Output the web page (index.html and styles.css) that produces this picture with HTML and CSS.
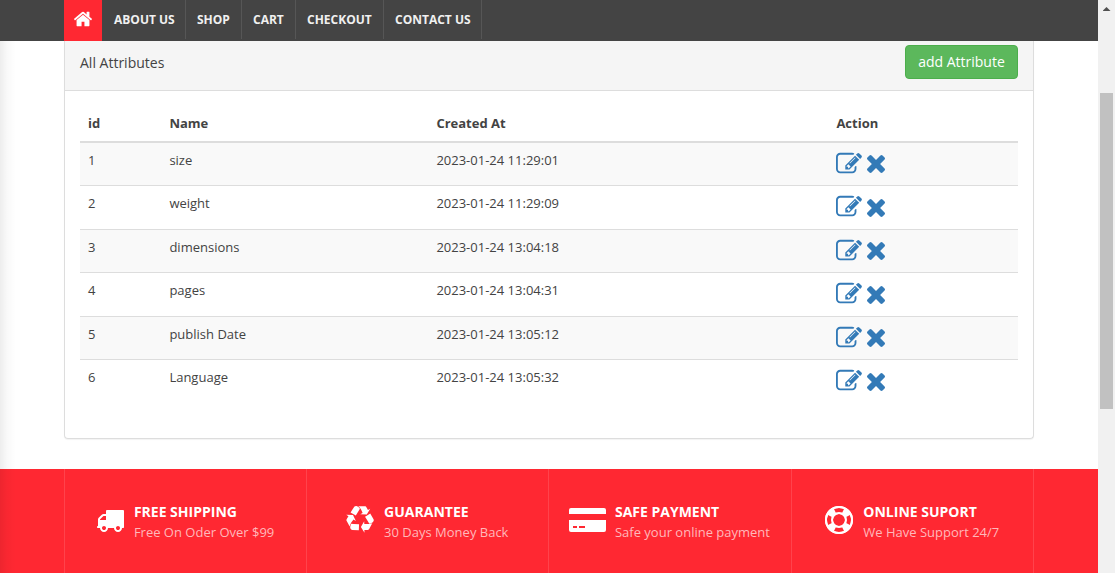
FILE: index.html
```html
<!DOCTYPE html>
<html lang="en">
<head>
<meta charset="utf-8">
<title>All Attributes</title>
<link rel="stylesheet" href="styles.css">
</head>
<body>
<svg class="sprite" aria-hidden="true">
  <symbol id="edit" viewBox="0 0 1792 1792"><path d="M888 1184l116-116-152-152-116 116v56h96v96h56zm440-720q-16-16-33 1l-350 350q-17 17-1 33t33-1l350-350q17-17 1-33zm80 594v190q0 119-84.5 203.5t-203.5 84.5h-832q-119 0-203.5-84.5t-84.5-203.5v-832q0-119 84.5-203.5t203.5-84.5h832q63 0 117 25 15 7 18 23 3 17-9 29l-49 49q-14 14-32 8-23-6-45-6h-832q-66 0-113 47t-47 113v832q0 66 47 113t113 47h832q66 0 113-47t47-113v-126q0-13 9-22l64-64q15-15 35-7t20 29zm-96-738l288 288-672 672h-288v-288zm444 132l-92 92-288-288 92-92q28-28 68-28t68 28l152 152q28 28 28 68t-28 68z"/></symbol>
  <symbol id="times" viewBox="302 366 1188 1188"><path d="M1490 1322q0 40-28 68l-136 136q-28 28-68 28t-68-28l-294-294-294 294q-28 28-68 28t-68-28l-136-136q-28-28-28-68t28-68l294-294-294-294q-28-28-28-68t28-68l136-136q28-28 68-28t68 28l294 294 294-294q28-28 68-28t68 28l136 136q28 28 28 68t-28 68l-294 294 294 294q28 28 28 68z"/></symbol>
</svg>
<div class="page">
  <nav class="navbar">
    <a class="nav-home" href="#"><svg viewBox="0 0 1792 1792"><path d="M1472 992v480q0 26-19 45t-45 19h-384v-384h-256v384h-384q-26 0-45-19t-19-45v-480q0-1 .5-3t.5-3l575-474 575 474q1 2 1 6zm223-69l-62 74q-8 9-21 11h-3q-13 0-21-7l-692-577-692 577q-12 8-24 7-13-2-21-11l-62-74q-8-10-7-23.5t11-21.5l719-599q32-26 76-26t76 26l244 204v-195q0-14 9-23t23-9h192q14 0 23 9t9 23v408l219 182q10 8 11 21.5t-7 23.5z"/></svg></a>
    <a class="nav-link about" href="#">ABOUT US</a>
    <a class="nav-link shop" href="#">SHOP</a>
    <a class="nav-link cart" href="#">CART</a>
    <a class="nav-link checkout" href="#">CHECKOUT</a>
    <a class="nav-link contact" href="#">CONTACT US</a>
  </nav>
  <main class="panel">
    <header class="panel-heading">
      <span>All Attributes</span>
      <a class="btn" href="#">add Attribute</a>
    </header>
    <div class="table">
      <div class="row head"><span>id</span><span>Name</span><span>Created At</span><span>Action</span></div>
      <div class="row"><span>1</span><span>size</span><span>2023-01-24 11:29:01</span><span class="actions"><svg class="edit"><use href="#edit"/></svg><svg class="times"><use href="#times"/></svg></span></div>
      <div class="row"><span>2</span><span>weight</span><span>2023-01-24 11:29:09</span><span class="actions"><svg class="edit"><use href="#edit"/></svg><svg class="times"><use href="#times"/></svg></span></div>
      <div class="row"><span>3</span><span>dimensions</span><span>2023-01-24 13:04:18</span><span class="actions"><svg class="edit"><use href="#edit"/></svg><svg class="times"><use href="#times"/></svg></span></div>
      <div class="row"><span>4</span><span>pages</span><span>2023-01-24 13:04:31</span><span class="actions"><svg class="edit"><use href="#edit"/></svg><svg class="times"><use href="#times"/></svg></span></div>
      <div class="row"><span>5</span><span>publish Date</span><span>2023-01-24 13:05:12</span><span class="actions"><svg class="edit"><use href="#edit"/></svg><svg class="times"><use href="#times"/></svg></span></div>
      <div class="row"><span>6</span><span>Language</span><span>2023-01-24 13:05:32</span><span class="actions"><svg class="edit"><use href="#edit"/></svg><svg class="times"><use href="#times"/></svg></span></div>
    </div>
  </main>
  <footer class="services">
    <div class="service">
      <svg class="truck" viewBox="64 256 1728 1408"><path d="M640 1408q0-52-38-90t-90-38-90 38-38 90 38 90 90 38 90-38 38-90zm-384-512h384v-256h-158q-13 0-22 9l-195 195q-9 9-9 22v30zm1280 512q0-52-38-90t-90-38-90 38-38 90 38 90 90 38 90-38 38-90zm256-1088v1024q0 15-4 26.5t-13.5 18.5-16.5 11.5-23.5 6-22.5 2-25.5 0-22.5-.5q0 106-75 181t-181 75-181-75-75-181h-384q0 106-75 181t-181 75-181-75-75-181h-64q-3 0-22.5.5t-25.5 0-22.5-2-23.5-6-16.5-11.5-13.5-18.5-4-26.5q0-26 19-45t45-19v-320q0-8-.5-35t0-38 2.5-34.5 6.5-37 14-30.5 22.5-30l198-198q19-19 50.5-32t58.5-13h160v-192q0-26 19-45t45-19h1024q26 0 45 19t19 45z"/></svg>
      <div><h3>FREE SHIPPING</h3><p>Free On Oder Over $99</p></div>
    </div>
    <div class="service inner">
      <svg class="recycle" viewBox="0 0 1792 1792"><path d="M836 1169l-15 368-2 22-420-29q-36-3-67-31.5t-47-65.5q-11-27-14.5-55t4-65 12-55 21.5-64 19-53q78 12 509 28zm-387-586l180 379-147-92q-63 72-111.5 144.5t-72.5 125-39.5 94.5-18.5 63l-4 21-190-357q-17-26-18-56t6-47l8-18q35-63 114-188l-140-86zm1231 517l-188 359q-12 29-36.5 46.5t-43.5 20.5l-18 4q-71 7-219 12l8 164-230-367 211-362 7 173q170 16 283 5t170-33zm-785-924q-47 63-265 435l-317-187-19-12 225-356q20-31 60-45t80-10q24 2 48.5 12t42 21 41.5 33 36 34.5 36 39.5 32 35zm655 307l212 363q18 37 12.5 76t-27.5 74q-13 20-33 37t-38 28-48.5 22-47 16-51.5 14-46 12q-34-72-265-436l313-195zm-143-226l142-83-220 373-419-20 151-86q-34-89-75-166t-75.5-123.5-64.5-80-47-46.5l-17-13 405 1q31-3 58 10.5t39 28.5l11 15q39 61 112 190z"/></svg>
      <div><h3>GUARANTEE</h3><p>30 Days Money Back</p></div>
    </div>
    <div class="service inner">
      <svg class="card" viewBox="0 0 37 24"><path d="M0 6V2Q0 0 2 0H35Q37 0 37 2V6ZM0 12H37V22Q37 24 35 24H2Q0 24 0 22ZM4 18V20H8V18ZM10 18V20H16V18Z" fill-rule="evenodd"/></svg>
      <div><h3>SAFE PAYMENT</h3><p>Safe your online payment</p></div>
    </div>
    <div class="service">
      <svg class="ring" viewBox="0 0 28 28"><circle class="line" cx="14" cy="14" r="13"/><circle class="line" cx="14" cy="14" r="7"/><path fill-rule="evenodd" d="M14 0A14 14 0 1 1 14 28A14 14 0 1 1 14 0ZM9 3L11.2 7.4Q14 6.2 16.8 7.4L19 3Q14 1 9 3ZM25 9L20.6 11.2Q21.8 14 20.6 16.8L25 19Q27 14 25 9ZM19 25L16.8 20.6Q14 21.8 11.2 20.6L9 25Q14 27 19 25ZM3 19L7.4 16.8Q6.2 14 7.4 11.2L3 9Q1 14 3 19ZM14 8A6 6 0 1 0 14 20A6 6 0 1 0 14 8Z"/></svg>
      <div><h3>ONLINE SUPORT</h3><p>We Have Support 24/7</p></div>
    </div>
  </footer>
  <div class="edge-shadow"></div>
</div>
<div class="scrollbar"><div class="arrow"></div><div class="thumb"></div></div>
</body>
</html>
```
FILE: styles.css
```css
* { box-sizing: border-box; }
body {
  margin: 0;
  width: 1115px;
  height: 573px;
  display: flex;
  overflow: hidden;
  font: 13px/20px "Open Sans", sans-serif;
  color: #434343;
  background: #fff;
}
a { color: inherit; text-decoration: none; }
svg { display: block; fill: currentColor; flex: none; }
.sprite { position: absolute; width: 0; height: 0; }
.page { position: relative; width: 1098px; height: 573px; display: flex; flex-direction: column; }
.navbar {
  height: 41px;
  flex: none;
  padding-left: 64px;
  display: flex;
  background: #444;
  color: #f0f0f0;
  font-size: 12px;
  font-weight: 700;
}
.nav-home { width: 38px; height: 41px; background: #ff2832; color: #fff; padding: 9px 0 0 9px; }
.nav-home svg { width: 20px; height: 20px; }
.nav-link { height: 39px; line-height: 39px; padding-left: 11px; border-right: 1px solid #565656; white-space: nowrap; }
.about { width: 84px; padding-left: 12px; }
.shop { width: 56px; }
.cart { width: 54px; }
.checkout { width: 88px; }
.contact { width: 98px; }

.panel {
  width: 970px;
  height: 398px;
  flex: none;
  margin-left: 64px;
  border: 1px solid #ddd;
  border-top: 0;
  border-radius: 0 0 4px 4px;
  box-shadow: 0 1px 1px rgba(0,0,0,.05);
}
.panel-heading {
  height: 50px;
  padding: 4px 15px 0;
  display: flex;
  justify-content: space-between;
  background: #f5f5f5;
  border-bottom: 1px solid #ddd;
  font-size: 14px;
}
.panel-heading span { line-height: 36px; }
.btn {
  width: 113px;
  height: 34px;
  line-height: 32px;
  text-align: center;
  color: #fff;
  background: #5cb85c;
  border: 1px solid #4cae4c;
  border-radius: 4px;
}
.table { margin: 15px 15px 0; }
.row {
  display: grid;
  grid-template-columns: 81.4px 267px 400px 1fr;
  height: 43.5px;
  padding: 7px 0 0 8px;
  border-top: 1px solid #ddd;
}
.row:nth-child(even) { background: #f9f9f9; }
.row.head { height: 37px; border-top: 0; border-bottom: 2px solid #ddd; font-weight: 700; }
.row.head + .row { height: 42.2px; border-top: 0; }
.actions { display: flex; gap: 5px; color: #337ab7; }
.edit { width: 26px; height: 26px; margin-top: 1px; }
.times { width: 18px; height: 18px; margin-top: 5.4px; }

.services {
  margin-top: 30px;
  flex: 1;
  padding: 0 64px;
  background: #ff2832;
  color: #fff;
  display: grid;
  grid-template-columns: repeat(3, 242.2px) 1fr;
}
.service {
  display: flex;
  justify-content: center;
  gap: 10px;
  padding-top: 33px;
  border-left: 1px solid #ff434c;
}
.service.inner { padding-right: 1px; }
.service:last-child { border-right: 1px solid #ff434c; }
h3, p { margin: 0; white-space: nowrap; }
h3 { font-size: 14px; line-height: 20px; font-weight: 700; }
p { color: #ffb8bb; line-height: 20px; }
.truck { width: 27px; height: 22px; margin-top: 8px; }
.recycle { width: 28px; height: 28px; margin-top: 4px; }
.card { width: 37px; height: 24px; margin: 6px -1px 0 0; }
.ring { width: 28px; height: 28px; margin-top: 4px; }
.line { fill: none; stroke: currentColor; stroke-width: 2; }
.edge-shadow {
  position: absolute;
  left: 0;
  top: 41px;
  bottom: 0;
  width: 16px;
  background: linear-gradient(to right, rgba(0,0,0,.07), rgba(0,0,0,.025) 45%, transparent);
}
.scrollbar { width: 17px; height: 573px; background: #f1f1f1; padding: 7px 2px 0; }
.arrow { margin: 0 auto; width: 8px; height: 4px; background: #505050; clip-path: polygon(50% 0, 100% 100%, 0 100%); }
.thumb { width: 13px; height: 316px; margin-top: 82px; background: #c1c1c1; }
```
